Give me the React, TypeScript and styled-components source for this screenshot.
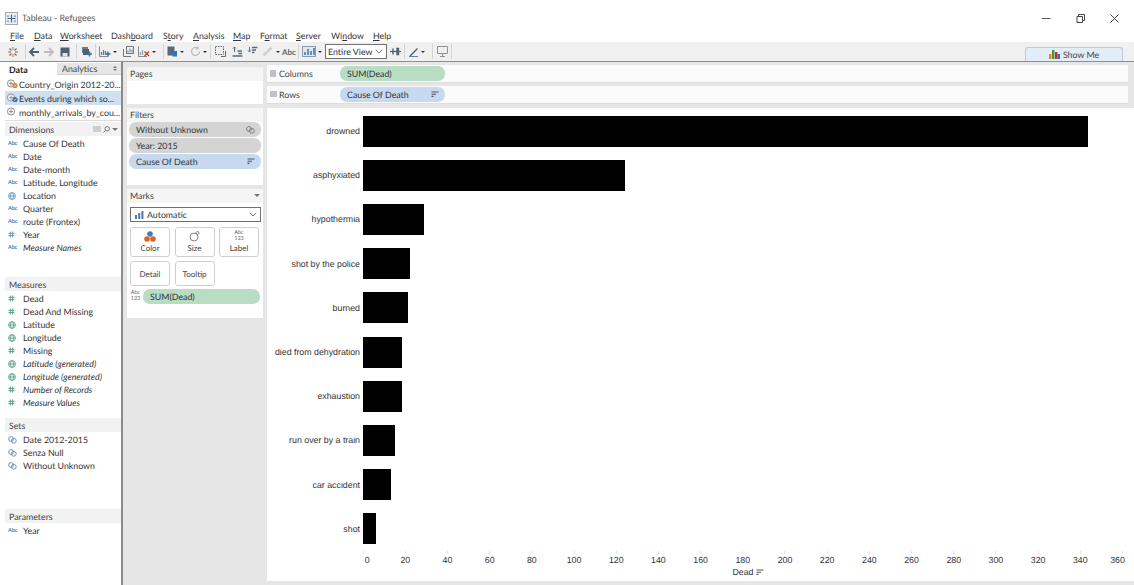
import React from "react";
import styled, { createGlobalStyle } from "styled-components";

const UI = `"Lato", "Open Sans", sans-serif`;
const Chart = `"Liberation Sans", Arial, sans-serif`;

const Global = createGlobalStyle`
  html, body { margin: 0; padding: 0; background: #fff; }
  body { width: 1134px; height: 585px; overflow: hidden; font-family: ${UI}; text-rendering: geometricPrecision; }
  * { box-sizing: border-box; }
`;

const Page = styled.div`
  width: 1134px; height: 585px; display: flex; flex-direction: column; background: #fff; color: #333; font-size: 8.8px; overflow: hidden;
`;
const TitleBar = styled.div`
  height: 27px; display: flex; align-items: flex-end; padding: 0 0 2px 5px; gap: 4px; position: relative;
`;
const TitleText = styled.span`
  font-size: 8.9px; color: #555; line-height: 14px;
`;
const WinButtons = styled.div`
  position: absolute; right: 3px; top: 11px; display: flex; align-items: center; height: 14px;
`;
const WinBtn = styled.div`
  width: 34px; height: 14px; display: flex; align-items: center; justify-content: center;
`;
const MenuBar = styled.div`
  height: 15px; display: flex; align-items: center; padding: 2px 0 0 10px; font-size: 8.8px; color: #333;
`;
const MenuItem = styled.span<{ $w: number }>`
  width: ${(p) => p.$w}px; white-space: nowrap; line-height: 13px; flex: none;
`;
const ToolBar = styled.div`
  height: 19px; background: #f0f0f0; display: flex; align-items: center; position: relative;
`;
const Tool = styled.div<{ $w: number }>`
  width: ${(p) => p.$w}px; height: 19px; display: flex; align-items: center; justify-content: center; flex: none;
`;
const Sep = styled.div`
  width: 1px; height: 15px; background: #d4d4d4; flex: none;
`;
const Caret = styled.span`
  display: inline-block; width: 0; height: 0; border-left: 2px solid transparent; border-right: 2px solid transparent; border-top: 2px solid #333; margin-left: 2px; flex: none;
`;
const AbcTool = styled.span`
  font-size: 8px; color: #666; font-weight: 700;
`;
const ViewSelect = styled.div`
  width: 62px; height: 15px; border: 1px solid #707070; background: #fff; display: flex; align-items: center; justify-content: space-between;
  padding: 0 3px 0 2px; font-size: 8.8px; color: #333; flex: none; white-space: nowrap;
`;
const ShowMe = styled.div`
  position: absolute; right: 11px; bottom: 0; width: 98px; height: 14px; background: #e2edf7; border: 1px solid #b9cbdc; border-bottom: none;
  border-radius: 3px 3px 0 0; display: flex; align-items: center; justify-content: center; gap: 3px; font-size: 8.8px; color: #444;
`;
const Body = styled.div`
  height: 524px; display: flex; border-top: 1px solid #8f8f8f; padding-left: 5px;
`;
const DataPane = styled.div`
  width: 118px; height: 100%; display: flex; flex-direction: column; border-right: 2px solid #8a8a8a; flex: none; padding-top: 1px;
`;
const Tabs = styled.div`
  height: 12px; display: flex; flex: none;
`;
const Tab = styled.div<{ $active?: boolean }>`
  height: 12px; display: flex; align-items: center; justify-content: space-between;
  width: ${(p) => (p.$active ? 52 : 64)}px; padding: 0 4px 0 ${(p) => (p.$active ? 4 : 5)}px;
  background: ${(p) => (p.$active ? "#fff" : "#e6e6e6")}; font-weight: ${(p) => (p.$active ? 700 : 400)};
  font-size: 8.8px; color: ${(p) => (p.$active ? "#222" : "#444")};
  border-bottom: ${(p) => (p.$active ? "none" : "1px solid #cfcfcf")};
`;
const Source = styled.div<{ $active?: boolean }>`
  height: 14px; display: flex; align-items: center; font-size: 8.8px; color: #333; white-space: nowrap; padding-left: 1px; overflow: hidden;
  background: ${(p) => (p.$active ? "#cfe0f1" : "transparent")}; flex: none;
`;
const SourceIcon = styled.span`
  width: 13px; flex: none; display: flex; align-items: center;
`;
const SourcesList = styled.div`
  padding-top: 2px; height: 46px; flex: none; border-bottom: 1px solid #dcdcdc;
`;
const SectionHead = styled.div<{ $mt?: number }>`
  height: 14px; background: #f2f2f2; display: flex; align-items: center; justify-content: space-between; padding: 0 3px 0 4px;
  font-size: 8.8px; color: #444; flex: none; margin-top: ${(p) => p.$mt ?? 0}px;
`;
const HeadIcons = styled.div`
  display: flex; gap: 2px; align-items: center;
`;
const FieldList = styled.div<{ $h: number }>`
  height: ${(p) => p.$h}px; flex: none; padding-top: 1px;
`;
const Field = styled.div<{ $italic?: boolean }>`
  height: 13px; display: flex; align-items: center; font-size: 8.8px; color: #333; white-space: nowrap;
  font-style: ${(p) => (p.$italic ? "italic" : "normal")}; line-height: 13px;
`;
const FieldIcon = styled.span`
  width: 18px; padding-left: 3px; flex: none; display: flex; align-items: center;
`;
const TinyAbc = styled.span`
  font-size: 5.5px; color: #4a7fb5; font-weight: 700; line-height: 6px; letter-spacing: -0.1px; font-style: normal;
`;
const Gray = styled.div`
  flex: 1; background: #e6e6e6; display: flex; padding: 5px 0 4px 4px; gap: 4px; min-width: 0;
`;
const Side = styled.div`
  width: 136px; display: flex; flex-direction: column; gap: 4px; flex: none;
`;
const Card = styled.div<{ $h: number }>`
  height: ${(p) => p.$h}px; background: #fff; flex: none; display: flex; flex-direction: column;
`;
const CardHead = styled.div`
  height: 14px; background: #f5f5f5; font-size: 8.8px; color: #444; padding: 0 3px 2px 3px; display: flex; align-items: center; justify-content: space-between; flex: none;
`;
const FilterList = styled.div`
  display: flex; flex-direction: column; gap: 1px; padding: 0 2px;
`;
const Pill = styled.div<{ $c: string; $w?: number }>`
  height: 15px; border-radius: 7px; background: ${(p) => p.$c}; display: flex; align-items: center; justify-content: space-between; padding: 0 6px 0 7px;
  font-size: 8.8px; color: #333; white-space: nowrap; flex: none; ${(p) => (p.$w ? `width: ${p.$w}px;` : "")}
`;
const MarkSelect = styled.div`
  margin: 4px 2px 0 3px; height: 15px; border: 1px solid #6f6f6f; display: flex; align-items: center; justify-content: space-between; padding: 0 3px 0 4px; font-size: 8.8px; color: #333;
`;
const MarkLabel = styled.span`
  display: flex; align-items: center; gap: 3px;
`;
const MarkGrid = styled.div`
  display: grid; grid-template-columns: repeat(3, 40px); gap: 4px 4.5px; padding: 5px 3px 0 3px;
`;
const MarkBtn = styled.div`
  height: 30px; border: 1px solid #cfcfcf; border-radius: 3px; display: flex; flex-direction: column; align-items: center; justify-content: flex-end; padding-bottom: 3px; font-size: 8px; color: #444; gap: 1px; background: #fff;
`;
const MarkBtnSm = styled(MarkBtn)`
  height: 25px; justify-content: center; padding: 0;
`;
const MarkField = styled.div`
  display: flex; align-items: center; gap: 2px; padding: 3px 2px 0 3px;
`;
const TinyTwoLine = styled.span`
  font-size: 5.5px; line-height: 5.5px; color: #666; text-align: center; display: block; width: 11px; flex: none;
`;
const Main = styled.div`
  flex: 1; display: flex; flex-direction: column; min-width: 0; gap: 3px; padding-right: 6px; margin-top: -2px;
`;
const Shelf = styled.div`
  height: 18px; background: #fbfbfb; display: flex; align-items: center; flex: none; border-bottom: 1px solid #dedede;
`;
const ShelfName = styled.div`
  width: 73px; display: flex; align-items: center; gap: 2px; font-size: 8.8px; color: #444; padding-left: 3px; flex: none;
`;
const Viz = styled.div`
  flex: 1; background: #fff; margin-top: 1px; display: flex; flex-direction: column; padding-top: 1px; margin-right: -6px;
`;
const BarRow = styled.div`
  height: 44.2px; display: flex; align-items: center; flex: none;
`;
const BarName = styled.div`
  width: 94px; text-align: right; padding-right: 1px; font-family: ${Chart}; font-size: 8.8px; color: #333; white-space: nowrap; flex: none; margin-right: 2px;
`;
const Bar = styled.div`
  height: 31px; background: #000;
`;
const Axis = styled.div`
  display: flex; padding-left: 75px; flex: none;
`;
const Tick = styled.div<{ $shift?: number }>`
  width: 42.2px; flex: none; display: flex; flex-direction: column; align-items: center; font-family: ${Chart}; font-size: 8.8px; color: #333; gap: 1px;
  &::before { content: ""; width: 1px; height: 3px; background: #e2e2e2; }
  span { transform: translateX(${(p) => p.$shift ?? 0}px); line-height: 11px; }
`;
const AxisTitle = styled.div`
  display: flex; align-items: center; justify-content: center; gap: 2px; font-family: ${Chart}; font-size: 8.8px; color: #333; line-height: 11px; width: 962px; margin-top: 1px;
`;

const Hash = ({ c = "#4c9a7a" }: { c?: string }) => (
  <svg width="7" height="7" viewBox="0 0 7 7" stroke={c} strokeWidth="0.9" fill="none">
    <path d="M2.3 0.5V6.5M4.7 0.5V6.5M0.5 2.4H6.5M0.5 4.6H6.5" />
  </svg>
);
const Globe = ({ c = "#4c9a7a" }: { c?: string }) => (
  <svg width="8" height="8" viewBox="0 0 8 8" stroke={c} strokeWidth="0.8" fill="none">
    <circle cx="4" cy="4" r="3.4" />
    <ellipse cx="4" cy="4" rx="1.5" ry="3.4" />
    <path d="M0.6 4H7.4" />
  </svg>
);
const SetIcon = ({ c = "#5b8fbf" }: { c?: string }) => (
  <svg width="9" height="8" viewBox="0 0 9 8" stroke={c} strokeWidth="0.9" fill="none">
    <circle cx="3" cy="3" r="2.4" />
    <circle cx="5.8" cy="4.8" r="2.4" />
  </svg>
);
const SortIcon = ({ c = "#555" }: { c?: string }) => (
  <svg width="8" height="7" viewBox="0 0 8 7" stroke={c} strokeWidth="1.1" fill="none">
    <path d="M0.5 1H7.5M0.5 3.2H5M0.5 5.4H2.5" />
  </svg>
);
const Chevron = () => (
  <svg width="8" height="5" viewBox="0 0 8 5" fill="none" stroke="#666" strokeWidth="0.9">
    <path d="M0.8 0.8L4 4L7.2 0.8" />
  </svg>
);
const BarsIcon = () => (
  <svg width="9" height="8" viewBox="0 0 9 8" fill="#4a78a8">
    <rect x="0" y="4" width="2" height="4" />
    <rect x="3.2" y="2" width="2" height="6" />
    <rect x="6.4" y="0" width="2" height="8" />
  </svg>
);
const Ico = ({ children, w = 14, h = 14 }: { children: React.ReactNode; w?: number; h?: number }) => (
  <svg width={w} height={h} viewBox={`0 0 ${w} ${h}`} fill="none">{children}</svg>
);

type F = [string, string, boolean?];
const fields: Record<string, F[]> = {
  dims: [
    ["abc", "Cause Of Death"], ["abc", "Date"], ["abc", "Date-month"], ["abc", "Latitude, Longitude"], ["globeB", "Location"],
    ["abc", "Quarter"], ["abc", "route (Frontex)"], ["hashB", "Year"], ["abc", "Measure Names", true],
  ],
  meas: [
    ["hash", "Dead"], ["hash", "Dead And Missing"], ["globe", "Latitude"], ["globe", "Longitude"], ["hash", "Missing"],
    ["globe", "Latitude (generated)", true], ["globe", "Longitude (generated)", true], ["hash", "Number of Records", true], ["hash", "Measure Values", true],
  ],
  sets: [["set", "Date 2012-2015"], ["set", "Senza Null"], ["set", "Without Unknown"]],
  params: [["abc", "Year"]],
};

const renderIcon = (k: string) => {
  if (k === "abc") return <TinyAbc>Abc</TinyAbc>;
  if (k === "hash") return <Hash />;
  if (k === "hashB") return <Hash c="#5b8fbf" />;
  if (k === "globe") return <Globe />;
  if (k === "globeB") return <Globe c="#5b8fbf" />;
  return <SetIcon />;
};

const Fields = ({ list, h }: { list: F[]; h: number }) => (
  <FieldList $h={h}>
    {list.map(([i, t, it]) => (
      <Field key={t} $italic={it}>
        <FieldIcon>{renderIcon(i)}</FieldIcon>
        {t}
      </Field>
    ))}
  </FieldList>
);

const DbIcon = ({ badge }: { badge?: string }) => (
  <SourceIcon>
    <svg width="13" height="11" viewBox="0 0 13 11" fill="none">
      <circle cx="5" cy="4.5" r="3.6" stroke="#888" strokeWidth="0.9" fill="#f5f5f5" />
      <path d="M3 4.5H7M5 2.5V6.5" stroke="#777" strokeWidth="0.7" />
      {badge && <circle cx="9" cy="6.5" r="2.6" fill={badge} />}
      {badge && <path d="M7.9 6.5L8.8 7.4L10.3 5.7" stroke="#fff" strokeWidth="0.7" />}
    </svg>
  </SourceIcon>
);

const bars: [string, number][] = [
  ["drowned", 725], ["asphyxiated", 262], ["hypothermia", 61], ["shot by the police", 47], ["burned", 45],
  ["died from dehydration", 39], ["exhaustion", 39], ["run over by a train", 32], ["car accident", 28], ["shot", 13],
];
const ticks = Array.from({ length: 19 }, (_, i) => i * 20);
const menus: [string, string, string, number][] = [
  ["", "F", "ile", 24], ["", "D", "ata", 26], ["", "W", "orksheet", 51], ["Dash", "b", "oard", 52], ["S", "t", "ory", 30], ["", "A", "nalysis", 40],
  ["", "M", "ap", 27], ["F", "o", "rmat", 36], ["", "S", "erver", 35], ["Wi", "n", "dow", 42], ["", "H", "elp", 30],
];

export default function App() {
  return (
    <Page>
      <Global />
      <TitleBar>
        <svg width="13" height="13" viewBox="0 0 13 13" fill="none">
          <rect x="0.5" y="0.5" width="12" height="12" fill="#eef1f5" stroke="#a8a8a8" />
          <path d="M6.5 2.5V10.5M2.5 6.5H10.5" stroke="#3c6a9a" strokeWidth="1.2" />
          <path d="M3 3V5.5M1.8 4.2H4.2M10 3V5.5M8.8 4.2H11.2M3 8V10.5M1.8 9.2H4.2M10 8V10.5M8.8 9.2H11.2" stroke="#6f93b8" strokeWidth="0.7" />
        </svg>
        <TitleText>Tableau - Refugees</TitleText>
        <WinButtons>
          <WinBtn><svg width="9" height="9" viewBox="0 0 9 9" stroke="#555"><path d="M0 4.5H8.5" /></svg></WinBtn>
          <WinBtn><svg width="9" height="9" viewBox="0 0 9 9" fill="none" stroke="#444"><path d="M1 2.5H6.5V8.5H1ZM2.5 2.5V0.5H8.5V6.5H6.5" /></svg></WinBtn>
          <WinBtn><svg width="9" height="9" viewBox="0 0 9 9" stroke="#444"><path d="M0.5 0.5L8.5 8.5M8.5 0.5L0.5 8.5" /></svg></WinBtn>
        </WinButtons>
      </TitleBar>
      <MenuBar>
        {menus.map(([a, u, b, w]) => <MenuItem key={a + u + b} $w={w}>{a}<u>{u}</u>{b}</MenuItem>)}
      </MenuBar>
      <ToolBar>
        <Tool $w={25}>
          <Ico w={12} h={12}>
            <path d="M6 1V4M6 8V11M1 6H4M8 6H11" stroke="#e2863a" strokeWidth="1.3" />
            <path d="M2.5 2.5L4.5 4.5M9.5 2.5L7.5 4.5M2.5 9.5L4.5 7.5M9.5 9.5L7.5 7.5" stroke="#4a78a8" strokeWidth="1.3" />
          </Ico>
        </Tool>
        <Sep />
        <Tool $w={15}><Ico><path d="M12 7H3M7 3L3 7L7 11" stroke="#4f5f70" strokeWidth="1.8" /></Ico></Tool>
        <Tool $w={16}><Ico><path d="M2 7H11M7 3L11 7L7 11" stroke="#bdbdbd" strokeWidth="1.8" /></Ico></Tool>
        <Tool $w={16}><Ico w={10} h={10}><path d="M0.5 0.5H9.5V9.5H0.5Z" fill="#4f5f70" /><rect x="2.5" y="6" width="5" height="3.5" fill="#e5e5e5" /></Ico></Tool>
        <Tool $w={3} />
        <Sep />
        <Tool $w={18}><Ico w={11} h={11}><rect x="1" y="1" width="6" height="6" fill="#6d7d8d" /><rect x="2" y="3" width="6" height="6" fill="#51606f" /><path d="M8.5 5.5V10.5M6 8H11" stroke="#2f75c0" strokeWidth="1.6" /></Ico></Tool>
        <Sep />
        <Tool $w={24}>
          <Ico w={12} h={11}><path d="M0.5 0.5V10.5H9" stroke="#888" /><path d="M2.5 9V6M4.5 9V4M6.5 9V5" stroke="#607f9f" strokeWidth="1.3" /><path d="M9 5.5V10.5M6.5 8H11.5" stroke="#2f75c0" strokeWidth="1.6" /></Ico>
          <Caret />
        </Tool>
        <Tool $w={16}>
          <Ico w={11} h={11}><path d="M0.5 3V10.5H8M3.5 0.5H10.5V7.5H3.5Z" stroke="#777" /><path d="M5 6.5V4.5M7 6.5V2.5M9 6.5V3.5" stroke="#607f9f" strokeWidth="1" /></Ico>
        </Tool>
        <Tool $w={22}>
          <Ico w={12} h={11}><path d="M0.5 0.5V10.5H9" stroke="#888" /><path d="M2.5 9V6M4.5 9V4" stroke="#9aa8b5" strokeWidth="1.3" /><path d="M6.5 5.5L11 10M11 5.5L6.5 10" stroke="#c0392b" strokeWidth="1.3" /></Ico>
          <Caret />
        </Tool>
        <Tool $w={5} />
        <Sep />
        <Tool $w={22}>
          <Ico w={11} h={11}><rect x="0.5" y="0.5" width="7" height="9" fill="#5b6a78" /><rect x="5.5" y="5" width="4.5" height="5.5" fill="#2f75c0" /></Ico>
          <Caret />
        </Tool>
        <Tool $w={24}>
          <Ico w={11} h={11}><path d="M9.5 5.5A4 4 0 1 1 8 2.3M8 0.5V3H5.5" stroke="#bdbdbd" strokeWidth="1.2" /></Ico>
          <Caret />
        </Tool>
        <Sep />
        <Tool $w={18}><Ico w={11} h={11}><path d="M0.5 0.5H8.5V8.5H0.5Z" stroke="#5b6a78" strokeDasharray="1.5 1" /><path d="M6 10.5H10.5V5" stroke="#5b6a78" /></Ico></Tool>
        <Tool $w={16}><Ico w={11} h={11}><path d="M2.5 1V6M1 2.5L2.5 1L4 2.5" stroke="#5b6a78" /><path d="M5.5 5H10M6.5 7.5H10M0.5 10H10.5" stroke="#5b6a78" strokeWidth="1.4" /></Ico></Tool>
        <Tool $w={15}><Ico w={11} h={11}><path d="M2.5 1V6M1 4.5L2.5 6L4 4.5" stroke="#2f75c0" /><path d="M5 1.5H10.5M5 4H9M5 6.5H7.5" stroke="#5b6a78" strokeWidth="1.4" /></Ico></Tool>
        <Tool $w={14}><Ico w={11} h={11}><path d="M1.5 9.5L9.5 1.5" stroke="#cfcfcf" strokeWidth="2.5" /></Ico></Tool>
        <Tool $w={6}><Caret /></Tool>
        <Tool $w={18}><AbcTool>Abc</AbcTool></Tool>
        <Sep />
        <Tool $w={26}>
          <Ico w={14} h={11}><rect x="0.5" y="0.5" width="13" height="10" fill="#e2e8ee" stroke="#8a9aa8" /><path d="M3 9V6M6 9V3M9 9V5M12 9V2" stroke="#4a78a8" strokeWidth="1.6" /></Ico>
          <Caret />
        </Tool>
        <ViewSelect>Entire View<Chevron /></ViewSelect>
        <Tool $w={17}><Ico w={11} h={9}><path d="M0 4.5H11" stroke="#4f5f70" strokeWidth="1.2" /><path d="M3 1.5V7.5M7 1.5H8.5V7.5H7Z" stroke="#4f5f70" strokeWidth="1.4" /></Ico></Tool>
        <Sep />
        <Tool $w={24}>
          <Ico w={10} h={10}><path d="M1 9L8.5 1.5" stroke="#555" strokeWidth="1.3" /><path d="M0 9.6H9" stroke="#4a78a8" strokeWidth="1" /></Ico>
          <Caret />
        </Tool>
        <Tool $w={3} />
        <Sep />
        <Tool $w={18}><Ico w={11} h={11}><path d="M0.5 0.5H10.5V7.5H0.5Z" stroke="#8a929a" /><path d="M3 10.5H8M5.5 7.5V10" stroke="#8a929a" /></Ico></Tool>
        <Sep />
        <ShowMe>
          <svg width="11" height="9" viewBox="0 0 11 9">
            <rect x="0" y="4" width="2.4" height="5" fill="#d58a2b" />
            <rect x="3" y="0" width="2.4" height="9" fill="#5a8a3a" />
            <rect x="6" y="2" width="2.4" height="7" fill="#a33" />
            <rect x="8.6" y="4" width="2.4" height="5" fill="#3a62b8" />
          </svg>
          Show Me
        </ShowMe>
      </ToolBar>
      <Body>
        <DataPane>
          <Tabs>
            <Tab $active>Data</Tab>
            <Tab>Analytics<svg width="4" height="5" viewBox="0 0 4 5" fill="#777"><path d="M0 3L2 5L4 3ZM0 2L2 0L4 2Z" /></svg></Tab>
          </Tabs>
          <SourcesList>
            <Source><DbIcon badge="#e2802a" />Country_Origin 2012-20...</Source>
            <Source $active><DbIcon badge="#2f6fb0" />Events during which so...</Source>
            <Source><DbIcon />monthly_arrivals_by_cou...</Source>
          </SourcesList>
          <SectionHead $mt={1}>
            Dimensions
            <HeadIcons>
              <svg width="8" height="6" viewBox="0 0 8 6" stroke="#aaa"><path d="M1 0V6M3 0V6M5 0V6M7 0V6" /></svg>
              <svg width="7" height="7" viewBox="0 0 7 7" fill="none" stroke="#777"><circle cx="4.2" cy="2.8" r="2.2" /><path d="M2.5 4.5L0.5 6.5" /></svg>
              <svg width="6" height="3" viewBox="0 0 6 3" fill="#777"><path d="M0 0H6L3 3Z" /></svg>
            </HeadIcons>
          </SectionHead>
          <Fields list={fields.dims} h={141} />
          <SectionHead>Measures</SectionHead>
          <Fields list={fields.meas} h={127} />
          <SectionHead>Sets</SectionHead>
          <Fields list={fields.sets} h={77} />
          <SectionHead>Parameters</SectionHead>
          <Fields list={fields.params} h={20} />
        </DataPane>
        <Gray>
          <Side>
            <Card $h={37}><CardHead>Pages</CardHead></Card>
            <Card $h={77}>
              <CardHead>Filters</CardHead>
              <FilterList>
                <Pill $c="#d4d4d4">Without Unknown<SetIcon c="#777" /></Pill>
                <Pill $c="#d4d4d4">Year: 2015</Pill>
                <Pill $c="#c6d9f1">Cause Of Death<SortIcon /></Pill>
              </FilterList>
            </Card>
            <Card $h={129}>
              <CardHead>
                Marks
                <svg width="6" height="3" viewBox="0 0 6 3" fill="#777"><path d="M0 0H6L3 3Z" /></svg>
              </CardHead>
              <MarkSelect>
                <MarkLabel><BarsIcon />Automatic</MarkLabel>
                <Chevron />
              </MarkSelect>
              <MarkGrid>
                <MarkBtn>
                  <svg width="12" height="11" viewBox="0 0 12 11"><circle cx="6" cy="3" r="2.8" fill="#4a78a8" /><circle cx="3" cy="8" r="2.8" fill="#d8642a" /><circle cx="9" cy="8" r="2.8" fill="#d8642a" /></svg>
                  Color
                </MarkBtn>
                <MarkBtn>
                  <svg width="11" height="11" viewBox="0 0 11 11" fill="none" stroke="#888"><circle cx="5" cy="6" r="4" /><circle cx="8.5" cy="2" r="1.5" /></svg>
                  Size
                </MarkBtn>
                <MarkBtn><TinyTwoLine>Abc<br />123</TinyTwoLine>Label</MarkBtn>
                <MarkBtnSm>Detail</MarkBtnSm>
                <MarkBtnSm>Tooltip</MarkBtnSm>
              </MarkGrid>
              <MarkField>
                <TinyTwoLine>Abc<br />123</TinyTwoLine>
                <Pill $c="#b9dcc4" $w={117}>SUM(Dead)</Pill>
              </MarkField>
            </Card>
          </Side>
          <Main>
            <Shelf>
              <ShelfName><svg width="7" height="7" viewBox="0 0 7 7" stroke="#888"><path d="M1 0V7M3 0V7M5 0V7" /></svg>Columns</ShelfName>
              <Pill $c="#b9dcc4" $w={105}>SUM(Dead)</Pill>
            </Shelf>
            <Shelf>
              <ShelfName><svg width="7" height="7" viewBox="0 0 7 7" stroke="#888"><path d="M0 1H7M0 3H7M0 5H7" /></svg>Rows</ShelfName>
              <Pill $c="#c6d9f1" $w={105}>Cause Of Death<SortIcon /></Pill>
            </Shelf>
            <Viz>
              {bars.map(([n, w]) => (
                <BarRow key={n}>
                  <BarName>{n}</BarName>
                  <Bar style={{ width: w }} />
                </BarRow>
              ))}
              <Axis>
                {ticks.map((t) => (
                  <Tick key={t} $shift={t === 0 ? 4 : t === 360 ? -5 : 0}><span>{t}</span></Tick>
                ))}
              </Axis>
              <AxisTitle>Dead <SortIcon /></AxisTitle>
            </Viz>
          </Main>
        </Gray>
      </Body>
    </Page>
  );
}
